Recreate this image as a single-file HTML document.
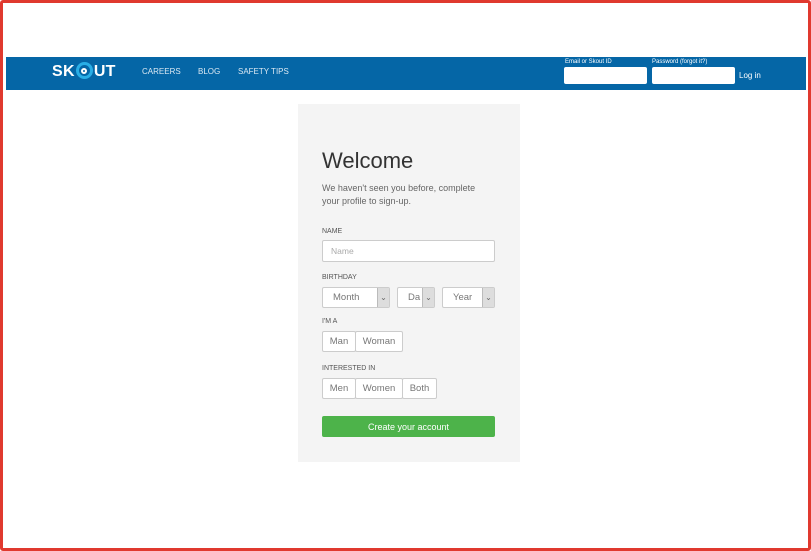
<!DOCTYPE html><html><head><style>
*{margin:0;padding:0;box-sizing:border-box}
body{width:811px;height:551px;position:relative;font-family:"Liberation Sans",sans-serif;background:#fff;overflow:hidden}
.frame{position:absolute;left:0;top:0;width:811px;height:551px;border:3px solid #e0392f;border-radius:3px}
.a{position:absolute}
.hdr{left:6px;top:57px;width:800px;height:33px;background:#0566a6}
.nav{color:#dbe8f3;font-size:8px;top:67px}
.lbl{color:#fff;font-size:6px;top:59px}
.inp{background:#fff;border-radius:2px;height:17px;top:67px;width:83px}
.card{left:298px;top:104px;width:222px;height:358px;background:#f4f4f4}
.t{color:#555;font-size:8px}
.box{background:#fff;border:1px solid #ccc;border-radius:2px;color:#777;font-size:9.5px;display:flex;align-items:center;justify-content:center}
.sel{justify-content:flex-start}
.arr{position:absolute;right:0;top:0;bottom:0;width:12px;border-left:1px solid #bbb;background:#ddd;font-size:8px;display:flex;align-items:center;justify-content:center;color:#666}
</style></head><body>
<div class="frame"></div>
<div class="a hdr"></div>
<div class="a" style="left:52px;top:62px;color:#fff;font-weight:bold;font-size:16px;letter-spacing:0.3px">SK<span style="display:inline-block;width:17px;height:17px;border:3px solid #29aee6;border-radius:50%;vertical-align:-3px;position:relative;margin:0 1px"><span style="position:absolute;left:2.5px;top:2.5px;width:6px;height:6px;border:2px solid #fff;border-radius:50%"></span></span>UT</div>
<div class="a nav" style="left:142px">CAREERS</div>
<div class="a nav" style="left:198px">BLOG</div>
<div class="a nav" style="left:238px">SAFETY TIPS</div>
<div class="a lbl" style="left:565px">Email or Skout ID</div>
<div class="a lbl" style="left:652px">Password (forgot it?)</div>
<div class="a inp" style="left:564px"></div>
<div class="a inp" style="left:652px"></div>
<div class="a" style="left:739px;top:71px;color:#fff;font-size:8px">Log in</div>
<div class="a card"></div>
<div class="a" style="left:322px;top:148px;font-size:22px;color:#333">Welcome</div>
<div class="a t" style="left:322px;top:182px;font-size:9px;line-height:13px;color:#666">We haven't seen you before, complete<br>your profile to sign-up.</div>
<div class="a t" style="left:322px;top:228px;font-size:7px">NAME</div>
<div class="a box sel" style="left:322px;top:240px;width:173px;height:22px;padding-left:8px;color:#aaa;font-size:8.5px">Name</div>
<div class="a t" style="left:322px;top:274px;font-size:7px">BIRTHDAY</div>
<div class="a box sel" style="left:322px;top:287px;width:68px;height:21px;padding-left:10px">Month<div class="arr">⌄</div></div>
<div class="a box sel" style="left:397px;top:287px;width:38px;height:21px;padding-left:10px">Da<div class="arr">⌄</div></div>
<div class="a box sel" style="left:442px;top:287px;width:53px;height:21px;padding-left:10px">Year<div class="arr">⌄</div></div>
<div class="a t" style="left:322px;top:318px;font-size:7px">I'M A</div>
<div class="a box" style="left:322px;top:331px;width:34px;height:21px">Man</div>
<div class="a box" style="left:355px;top:331px;width:48px;height:21px">Woman</div>
<div class="a t" style="left:322px;top:365px;font-size:7px">INTERESTED IN</div>
<div class="a box" style="left:322px;top:378px;width:34px;height:21px">Men</div>
<div class="a box" style="left:355px;top:378px;width:48px;height:21px">Women</div>
<div class="a box" style="left:402px;top:378px;width:35px;height:21px">Both</div>
<div class="a" style="left:322px;top:416px;width:173px;height:21px;background:#4db34a;border-radius:2px;color:#fff;font-size:9px;display:flex;align-items:center;justify-content:center">Create your account</div>
</body></html>
